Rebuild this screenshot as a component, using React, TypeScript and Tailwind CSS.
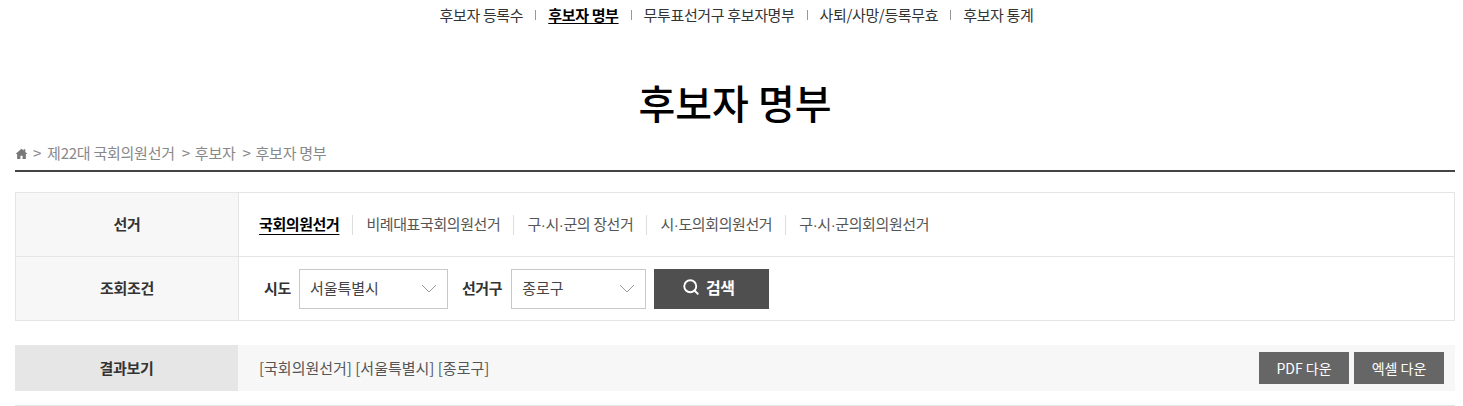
import { Search } from "lucide-react";

const topMenu = ["후보자 등록수", "후보자 명부", "무투표선거구 후보자명부", "사퇴/사망/등록무효", "후보자 통계"];
const elections = [
  ["국회의원선거"],
  ["비례대표국회의원선거"],
  ["구", "시", "군의 장선거"],
  ["시", "도의회의원선거"],
  ["구", "시", "군의회의원선거"],
];

function FakeSelect({ value, width }: { value: string; width: string }) {
  return (
    <div className={`${width} h-10 flex items-center justify-between border border-[#c8c8c8] bg-white pl-[10px] pr-[10px] text-[15px] tracking-normal text-[#444]`}>
      <span>{value}</span>
      <svg width="16" height="9" viewBox="0 0 16 9" fill="none" stroke="#999" strokeWidth="1">
        <path d="M1 1l7 7 7-7" />
      </svg>
    </div>
  );
}

export default function App() {
  return (
    <div className="h-[406px] overflow-hidden bg-white pl-[15px] pr-[8px] text-[15px] text-[#333] font-['Noto_Sans_CJK_KR','Noto_Sans',sans-serif] tracking-[-0.35px]">
      <ul className="flex h-[30px] items-center justify-center pl-[3px]">
        {topMenu.map((item, i) => (
          <li key={item} className="flex items-center">
            {i > 0 && <span className="mx-3 h-[10px] w-px bg-[#999]" />}
            <span className={i === 1 ? "font-bold text-black underline underline-offset-2" : "text-[#333]"}>{item}</span>
          </li>
        ))}
      </ul>

      <h1 className="mt-[47px] h-[50px] text-center text-[40px] font-medium leading-[50px] tracking-normal text-black">후보자 명부</h1>

      <div className="mt-[5px] flex h-[40px] items-center gap-[7px] border-b-2 border-[#444] pt-[5px] tracking-[-0.25px] text-[#888]">
        <svg width="13" height="13" viewBox="0 0 12 12" fill="#777" className="mr-[-2px]">
          <path d="M6 1.5L0.5 6.5H2V11H5V8H7V11H10V6.5H11.5L9.5 4.7V2H8V3.3z" />
        </svg>
        <span>&gt;<span className="ml-[6px]">제22대 국회의원선거</span></span>
        <span>&gt;<span className="ml-[5px]">후보자</span></span>
        <span>&gt;<span className="ml-[5px]">후보자 명부</span></span>
      </div>

      <div className="mt-5 border border-[#e5e5e5]">
        <div className="flex h-[64px] border-b border-[#e5e5e5]">
          <div className="flex w-[223px] items-center justify-center border-r border-[#e5e5e5] bg-[#f7f7f7] font-bold">선거</div>
          <div className="flex items-center pl-5 tracking-[-0.4px]">
            {elections.map((parts, i) => (
              <span key={i} className="flex items-center">
                {i > 0 && <span className="mx-[13px] h-5 w-px bg-[#ddd]" />}
                <span className={i === 0 ? "font-bold text-black underline underline-offset-4" : "text-[#555]"}>
                  {parts.map((part, j) => (
                    <span key={j}>
                      {j > 0 && <span className="font-['Liberation_Sans']">·</span>}
                      {part}
                    </span>
                  ))}
                </span>
              </span>
            ))}
          </div>
        </div>
        <div className="flex h-[63px]">
          <div className="flex w-[223px] items-center justify-center border-r border-[#e5e5e5] bg-[#f7f7f7] font-bold">조회조건</div>
          <div className="flex items-center pl-[25px]">
            <span className="mr-2 font-bold">시도</span>
            <FakeSelect value="서울특별시" width="w-[149px]" />
            <span className="ml-[14px] mr-[9px] font-bold">선거구</span>
            <FakeSelect value="종로구" width="w-[135px]" />
            <button className="ml-2 flex h-10 w-[115px] items-center justify-center gap-[6px] bg-[#4f4f4f] pr-[7px] pb-[3px] text-[16px] font-bold text-white">
              <Search size={18} strokeWidth={2.5} />
              검색
            </button>
          </div>
        </div>
      </div>

      <div className="mt-6 flex h-[46px] bg-[#f7f7f7]">
        <div className="flex w-[223px] items-center justify-center bg-[#e6e6e6] font-bold">결과보기</div>
        <div className="flex flex-1 items-center justify-between pl-[21px] pr-[11px] tracking-normal text-[#555]">
          <span>[국회의원선거] [서울특별시] [종로구]</span>
          <div className="flex gap-[5px] text-[14px]">
            <button className="h-8 w-[90px] bg-[#666] text-white">PDF 다운</button>
            <button className="h-8 w-[90px] bg-[#666] text-white">엑셀 다운</button>
          </div>
        </div>
      </div>

      <div className="mt-[14px] border-t border-[#e5e5e5]" />
    </div>
  );
}
